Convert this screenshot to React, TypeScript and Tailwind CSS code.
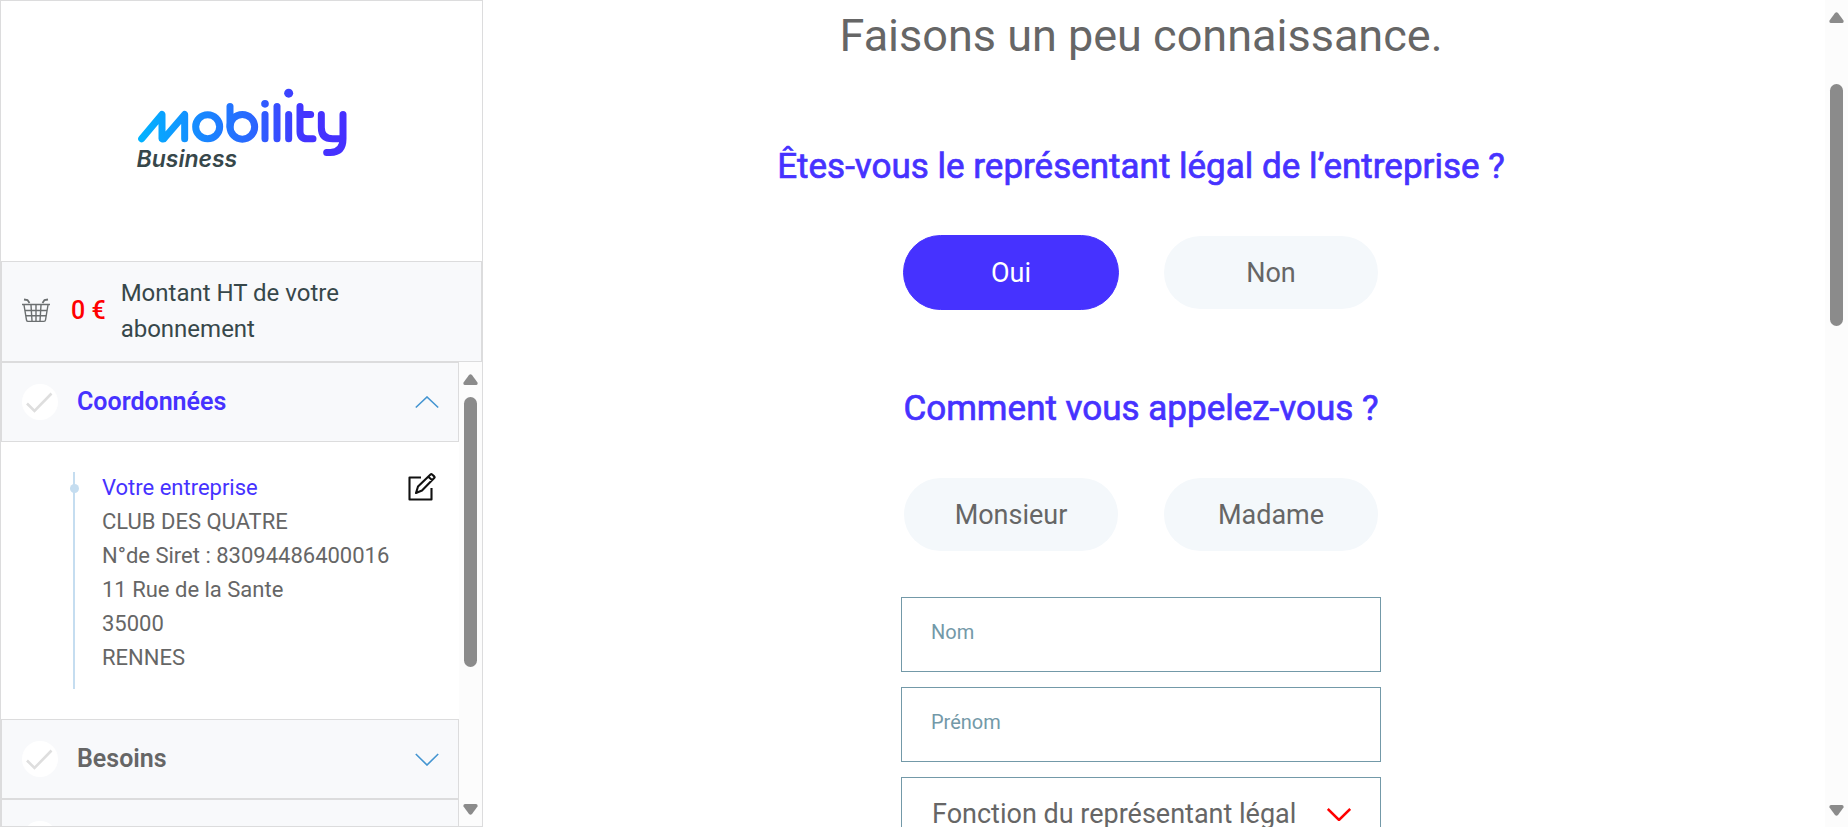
import { useState } from "react";
import type { ReactNode } from "react";

function Logo() {
  return (
    <div className="flex flex-col">
      <svg viewBox="0 0 630 206" className="h-[69px] w-[210px]" fill="none" role="img" aria-label="mobility">
        <defs>
          <linearGradient id="brand" gradientUnits="userSpaceOnUse" x1="0" y1="100" x2="630" y2="100">
            <stop offset="0" stopColor="#00b4ff" />
            <stop offset="0.55" stopColor="#2b66ff" />
            <stop offset="0.8" stopColor="#4433ff" />
            <stop offset="1" stopColor="#4630ff" />
          </linearGradient>
        </defs>
        <g stroke="url(#brand)" strokeWidth="21" strokeLinecap="round" strokeLinejoin="round">
          <path d="M14 152 L75 79 V152 Q80 154 83 149 L143 79 V152" />
          <circle cx="212" cy="116" r="36" />
          <path d="M279 55 V116" />
          <circle cx="316" cy="116" r="37" />
          <path d="M384 79 V152" />
          <path d="M420 55 V152" />
          <path d="M455 79 V152" />
          <path d="M489 55 V130 Q489 152 511 152 H528 M489 79 H521" />
          <path d="M553 79 V118 Q553 152 587 152 H618 M618 79 V152 Q618 193 580 193 H569" />
        </g>
        <g fill="url(#brand)">
          <circle cx="384" cy="47" r="11.5" />
          <circle cx="455" cy="15" r="13.5" />
        </g>
      </svg>
      <p className="-mt-3 font-['Inter',sans-serif] text-[23px] leading-7 font-semibold italic text-[#37474a]">Business</p>
    </div>
  );
}

function BasketIcon() {
  return (
    <svg viewBox="0 0 30 26" className="h-[26px] w-[30px] shrink-0" fill="none" stroke="#6b6f70" strokeWidth="1.4" aria-hidden="true">
      <path d="M1 6.5H29M3 7L5.5 22Q5.8 23.4 7 23.4H23Q24.300 23.400 24.500 22L27 7M4 12.500H26M5 17.700H25M10 7L11 23M15 7V23M20 7L19 23" />
      <path d="M3 1.500L6.500 2L8.500 5M27 1.500L23.500 2L21.500 5" strokeWidth="1.800" />
    </svg>
  );
}

function CheckBadge() {
  return (
    <svg viewBox="0 0 36 36" className="size-9 shrink-0" aria-hidden="true">
      <circle cx="18" cy="18" r="18" fill="#fff" />
      <path d="M5 19.500L12.500 27L29.500 9.500" fill="none" stroke="#dedede" strokeWidth="2.600" />
    </svg>
  );
}

function Chevron({ up = false, className }: { up?: boolean; className: string }) {
  return (
    <svg viewBox="0 0 24 13" className={className} fill="none" stroke="currentColor" aria-hidden="true">
      <path d={up ? "M0.800 11.500L12 1L23.200 11.500" : "M0.800 1L12 12L23.200 1"} />
    </svg>
  );
}

function EditIcon() {
  return (
    <svg viewBox="0 0 28 28" className="size-7" fill="none" stroke="#111" strokeWidth="2.100" strokeLinejoin="round" aria-hidden="true">
      <path d="M13 4.500H1.500V26.500H23.500V15" />
      <path d="M8 20L10 13.500L22.500 1.500Q23.300 0.800 24.100 1.500L26.200 3.400Q27 4.200 26.200 5L14 17.500ZM20.300 3.700L24.300 7.200" />
    </svg>
  );
}

function ScrollTrack({ thumb, className }: { thumb: string; className: string }) {
  return (
    <div className={`flex w-[23px] shrink-0 flex-col items-center bg-[#fcfcfc] ${className}`} aria-hidden="true">
      <svg viewBox="0 0 15 11" className="h-[11px] w-[15px] shrink-0" fill="#8b8b8b">
        <path d="M6 1Q7.500-0.500 9 1L14.500 8.500Q15 11 13 11H2Q0 11 0.500 8.500Z" />
      </svg>
      <div className={`w-[13px] rounded-full bg-[#8b8b8b] ${thumb}`} />
      <svg viewBox="0 0 15 11" className="mt-auto h-[11px] w-[15px] shrink-0" fill="#8b8b8b">
        <path d="M6 10Q7.500 11.500 9 10L14.500 2.500Q15 0 13 0H2Q0 0 0.500 2.500Z" />
      </svg>
    </div>
  );
}

function SectionHeader({ title, open, onClick }: { title?: string; open: boolean; onClick: () => void }) {
  return (
    <button
      type="button"
      aria-expanded={open}
      aria-label={title ? undefined : "Section suivante"}
      onClick={onClick}
      className="flex h-20 w-full shrink-0 items-center border border-[#dcdcdd] bg-[#f8f9fb] pr-[19px] pl-5 text-left"
    >
      <CheckBadge />
      <span className={`grow pl-[19px] text-[25px] font-semibold ${open ? "text-[#4632ff]" : "text-[#666]"}`}>{title}</span>
      <Chevron up={open} className="h-[13px] w-6 stroke-[1.6] text-[#4495d1]" />
    </button>
  );
}

function Choice({ active, onClick, children }: { active: boolean; onClick: () => void; children: ReactNode }) {
  return (
    <button
      type="button"
      aria-pressed={active}
      onClick={onClick}
      className={`h-[75px] w-[216px] rounded-full border pt-0.5 text-[27px] ${
        active ? "border-[#4632ff] bg-[#4632ff] text-white" : "border-transparent bg-[#f4f8fb] bg-clip-padding text-[#666]"
      }`}
    >
      {children}
    </button>
  );
}

const company = ["CLUB DES QUATRE", "N°de Siret : 83094486400016", "11 Rue de la Sante", "35000", "RENNES"];

const fieldClass =
  "h-[75px] w-full border border-[#7399a8] bg-white px-[29px] pb-1.5 text-[20px] text-[#666] outline-none placeholder:text-[#7399a8] placeholder:opacity-100";

const questionClass = "shrink-0 text-[35px] leading-12 text-[#4632ff] [-webkit-text-stroke:0.7px_#4632ff]";

export default function App() {
  const [section, setSection] = useState("Coordonnées");
  const [legal, setLegal] = useState("Oui");
  const [civility, setCivility] = useState("");
  const toggle = (name: string) => setSection(section === name ? "" : name);

  return (
    <div className="flex h-screen overflow-hidden bg-white font-['Roboto',sans-serif] text-[#666]">
      <aside className="flex w-[483px] shrink-0 flex-col border border-[#dcdcdd]">
        <div className="flex h-[260px] shrink-0 justify-center pt-[87px]">
          <Logo />
        </div>
        <div className="flex h-[101px] shrink-0 items-center border border-[#dcdcdd] bg-[#f8f9fb] pb-px pl-[19px]">
          <BasketIcon />
          <strong className="shrink-0 pl-5 text-[25px] font-medium text-[#ff0000]">0 €</strong>
          <p className="w-60 pl-[15px] text-[24px] leading-9 text-[#37474a]">Montant HT de votre abonnement</p>
        </div>
        <div className="flex min-h-0 grow">
          <div className="flex min-w-0 grow flex-col overflow-hidden">
            <SectionHeader title="Coordonnées" open={section === "Coordonnées"} onClick={() => toggle("Coordonnées")} />
            {section === "Coordonnées" && (
              <div className="h-[277px] shrink-0 pt-[30px] pr-[23px] pl-[72px]">
                <div className="relative flex h-[217px] justify-between border-l-2 border-[#c5ddf0] pl-[27px]">
                  <span className="absolute top-3 -left-[5px] size-[9px] rounded-full bg-[#c5ddf0]" />
                  <div className="-mt-px text-[22px] leading-[34px]">
                    <h3 className="text-[#4632ff]">Votre entreprise</h3>
                    {company.map((line) => (
                      <p key={line}>{line}</p>
                    ))}
                  </div>
                  <button type="button" aria-label="Modifier" className="h-[30px] shrink-0">
                    <EditIcon />
                  </button>
                </div>
              </div>
            )}
            <SectionHeader title="Besoins" open={section === "Besoins"} onClick={() => toggle("Besoins")} />
            <SectionHeader open={section === "next"} onClick={() => toggle("next")} />
          </div>
          <ScrollTrack className="pt-3 pb-[11px]" thumb="mt-3 h-[270px]" />
        </div>
      </aside>

      <main className="flex min-w-0 grow flex-col items-center overflow-hidden pr-[26px]">
        <h1 className="mt-[5px] shrink-0 text-[45px] leading-[62px]">Faisons un peu connaissance.</h1>

        <h2 className={`mt-[76px] ${questionClass}`}>Êtes-vous le représentant légal de l’entreprise ?</h2>
        <div className="mt-11 flex shrink-0 gap-11">
          {["Oui", "Non"].map((label) => (
            <Choice key={label} active={legal === label} onClick={() => setLegal(label)}>
              {label}
            </Choice>
          ))}
        </div>

        <h2 className={`mt-[75px] ${questionClass}`}>Comment vous appelez-vous ?</h2>
        <div className="mt-11 flex shrink-0 gap-11">
          {["Monsieur", "Madame"].map((label) => (
            <Choice key={label} active={civility === label} onClick={() => setCivility(label)}>
              {label}
            </Choice>
          ))}
        </div>

        <form className="mt-[45px] flex w-[480px] shrink-0 flex-col gap-[15px]">
          <input className={fieldClass} aria-label="Nom" placeholder="Nom" />
          <input className={fieldClass} aria-label="Prénom" placeholder="Prénom" />
          <div className="grid">
            <select
              aria-label="Fonction du représentant légal"
              className="col-start-1 row-start-1 h-[75px] w-full appearance-none border border-[#7399a8] bg-white pl-[30px] text-[27px] text-[#666] outline-none"
            >
              <option>Fonction du représentant légal</option>
            </select>
            <Chevron className="pointer-events-none col-start-1 row-start-1 mr-[30px] h-[13px] w-6 self-center justify-self-end stroke-[2.5] text-[#ff0000]" />
          </div>
        </form>
      </main>
      <ScrollTrack className="pt-3 pb-[11px]" thumb="mt-[61px] h-[242px]" />
    </div>
  );
}
